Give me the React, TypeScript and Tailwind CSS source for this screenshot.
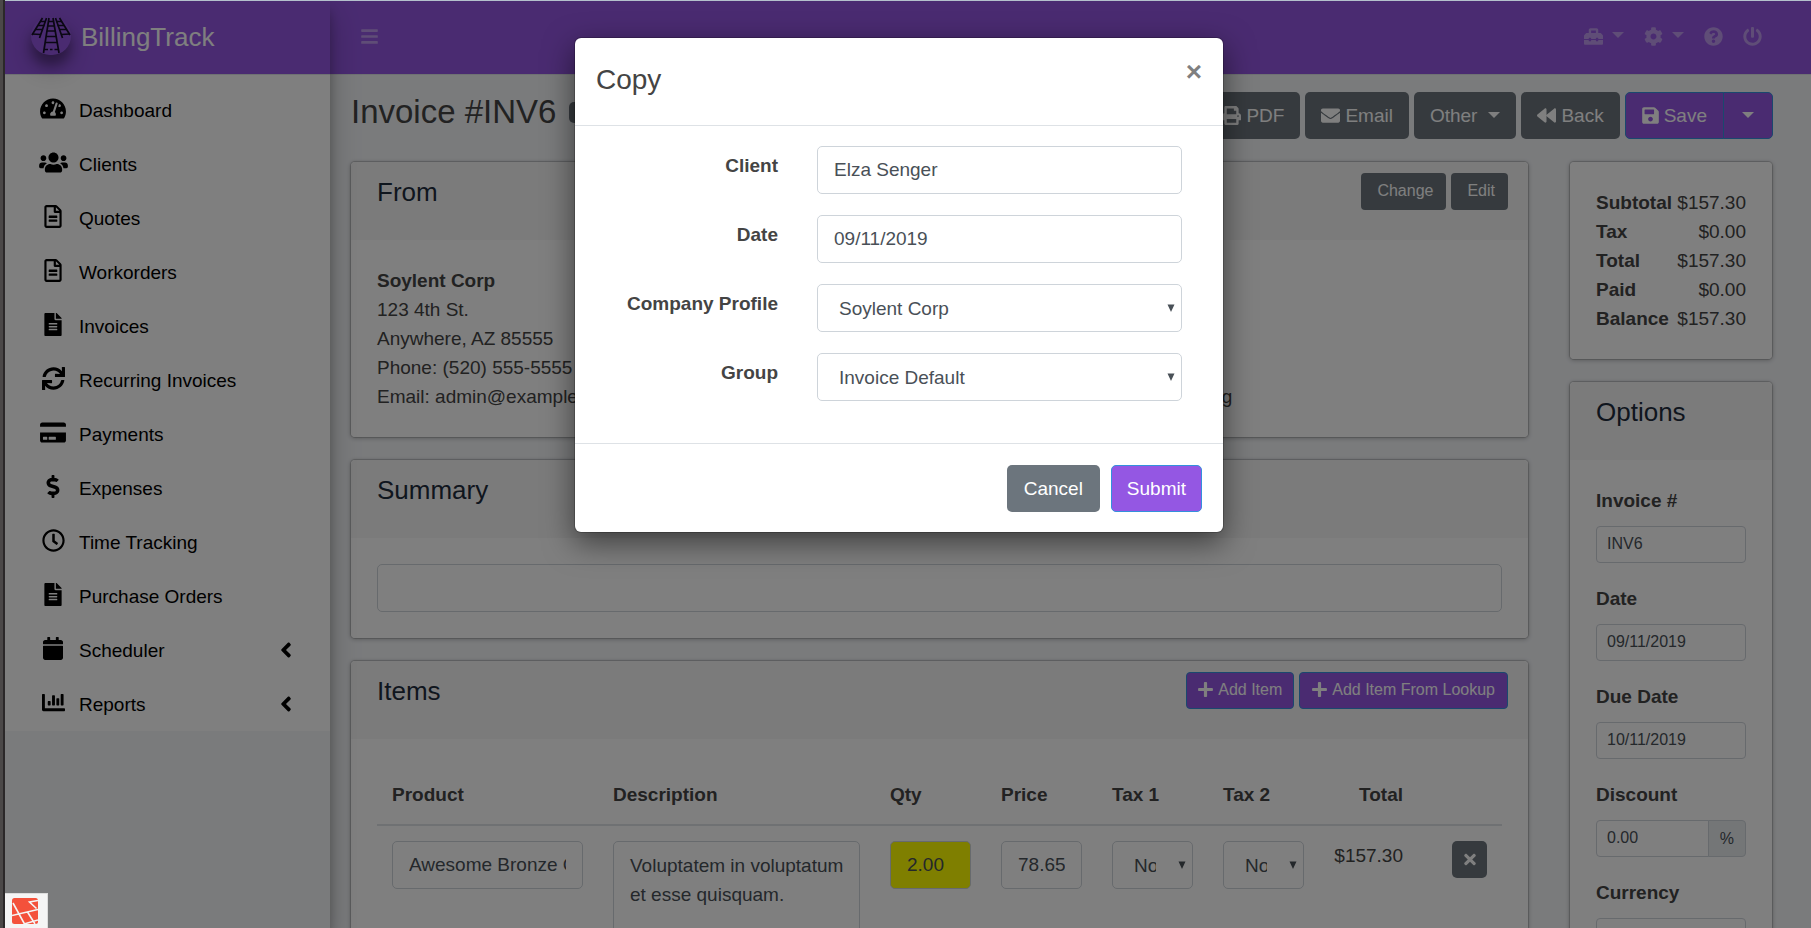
import React from "react";
import {
  FaAngleLeft,
  FaBackward,
  FaBars,
  FaCalendar,
  FaChartBar,
  FaCog,
  FaCreditCard,
  FaDollarSign,
  FaEnvelope,
  FaFileAlt,
  FaPlus,
  FaPowerOff,
  FaPrint,
  FaQuestionCircle,
  FaRegClock,
  FaRegFileAlt,
  FaSave,
  FaSync,
  FaTachometerAlt,
  FaTimes,
  FaToolbox,
  FaUsers,
} from "react-icons/fa";
import type { IconType } from "react-icons";

type NavEntry = { label: string; icon: IconType; width: string; expandable?: boolean };

const NAV: NavEntry[] = [
  { label: "Dashboard", icon: FaTachometerAlt, width: "w-[26px]" },
  { label: "Clients", icon: FaUsers, width: "w-[29px]" },
  { label: "Quotes", icon: FaRegFileAlt, width: "w-[18px]" },
  { label: "Workorders", icon: FaRegFileAlt, width: "w-[18px]" },
  { label: "Invoices", icon: FaFileAlt, width: "w-[18px]" },
  { label: "Recurring Invoices", icon: FaSync, width: "w-[23px]" },
  { label: "Payments", icon: FaCreditCard, width: "w-[26px]" },
  { label: "Expenses", icon: FaDollarSign, width: "w-[18px]" },
  { label: "Time Tracking", icon: FaRegClock, width: "w-[23px]" },
  { label: "Purchase Orders", icon: FaFileAlt, width: "w-[18px]" },
  { label: "Scheduler", icon: FaCalendar, width: "w-[20px]", expandable: true },
  { label: "Reports", icon: FaChartBar, width: "w-[23px]", expandable: true },
];

const TOTALS: [string, string][] = [
  ["Subtotal", "$157.30"],
  ["Tax", "$0.00"],
  ["Total", "$157.30"],
  ["Paid", "$0.00"],
  ["Balance", "$157.30"],
];

const CARD =
  "rounded-[5px] border border-black/5 bg-white bg-clip-padding shadow-[0_0_1px_rgba(0,0,0,0.125),0_1px_4px_rgba(0,0,0,0.2)]";
const GRAY_BTN = "rounded-[5px] bg-[#6c757d] text-white";
const PURPLE_BTN = "border border-[#3490dc] bg-[#9457e3] text-white";
const FIELD =
  "block h-12 w-full rounded-[5px] border border-[#ced4da] px-4 text-[#495057]";

function Caret() {
  return (
    <span className="inline-block border-x-[6px] border-t-[6px] border-x-transparent border-t-current" />
  );
}

function Logo() {
  return (
    <span className="h-[38px] w-[40px] rounded-full shadow-[0_13px_26px_rgba(0,0,0,0.25),0_10px_12px_rgba(0,0,0,0.3)]">
      <svg viewBox="0 0 40 38" className="h-[38px] w-[40px]" fill="none" stroke="#150f26">
        <circle cx="20" cy="18.500" r="19" fill="#9457e3" stroke="none" />
        <g strokeWidth="1.700">
          <path d="M18 1 12.500 36M22 1 28 36" />
          <path d="M17.500 4.500h5M17 9h6M16 14h8M15.500 19.500h9.500M14.500 25.500h11.500" />
          <path d="M13.500 32.500h3.500M19 32.500h2.500M23.500 32.500h3.500" strokeWidth="1.300" />
          <path d="M11.500 1 1 18M15.500 1 8.500 21" />
          <path d="M9 4.500h6M7 8.500h6.500M4.500 12.500h7M1 17l9 .5" />
          <path d="M28.500 1 39 18M24.500 1 31.500 21" />
          <path d="M31 4.500h-6M33 8.500h-6.500M35.500 12.500h-7M39 17l-9 .5" />
        </g>
      </svg>
    </span>
  );
}

function Sidebar() {
  return (
    <aside className="relative z-10 w-[325px] shrink-0 shadow-[0_14px_28px_rgba(0,0,0,0.25),0_10px_10px_rgba(0,0,0,0.22)]">
      <a href="#home" className="flex h-[73px] items-center gap-[10px] bg-[#9457e3] pb-[3px] pl-[26px]">
        <Logo />
        <span className="pt-[2px] text-[26px] leading-9 text-white">BillingTrack</span>
      </a>
      <nav className="border-t border-[#dee2e6] bg-white pt-2">
        <ul>
          {NAV.map(({ label, icon: Icon, width, expandable }) => (
            <li key={label}>
              <a href={"#" + label} className="flex h-[54px] items-center pr-[34px] pl-[30px] text-black">
                <span className="flex w-9 justify-center pb-1">
                  <Icon className={"h-[23px] shrink-0 " + width} />
                </span>
                <span className="ml-2 grow">{label}</span>
                {expandable && <FaAngleLeft className="h-6 w-5" />}
              </a>
            </li>
          ))}
        </ul>
      </nav>
    </aside>
  );
}

function TopBar() {
  return (
    <header className="flex h-[74px] items-center border-b border-[#dee2e6] bg-[#9457e3] pr-[49px] pb-[3px] pl-[31px] text-white/40">
      <button aria-label="Toggle menu">
        <FaBars className="h-[19px] w-[17px]" />
      </button>
      <div className="ml-auto flex items-center">
        <button aria-label="Tools" className="flex items-center gap-[9px]">
          <FaToolbox className="h-[19px] w-[19px]" />
          <span className="flex pb-[2px]"><Caret /></span>
        </button>
        <button aria-label="Settings" className="ml-5 flex items-center gap-[9px]">
          <FaCog className="h-[19px] w-[19px]" />
          <span className="flex pb-[2px]"><Caret /></span>
        </button>
        <button aria-label="Help" className="ml-5">
          <FaQuestionCircle className="h-[19px] w-[19px]" />
        </button>
        <button aria-label="Log out" className="ml-5">
          <FaPowerOff className="h-[19px] w-[19px]" />
        </button>
      </div>
    </header>
  );
}

function Card({
  title,
  actions,
  children,
}: {
  title?: string;
  actions?: React.ReactNode;
  children: React.ReactNode;
}) {
  return (
    <section className={CARD}>
      {title && (
        <div className="flex h-[78px] items-start justify-between rounded-t-[5px] bg-[#f7f7f7] pt-[11px] pr-5 pl-[26px]">
          <h2 className="pt-px text-[26px] leading-9 text-[#1f2d3d]">{title}</h2>
          <div className="flex gap-[5px] text-[16px]">{actions}</div>
        </div>
      )}
      <div className="p-[26px]">{children}</div>
    </section>
  );
}

function Toolbar() {
  const button = "flex h-[47px] items-center gap-[5px] px-4 " + GRAY_BTN;
  return (
    <div className="flex gap-[5px]">
      <button className={button}>
        <FaPrint className="h-[19px] w-[19px]" />
        PDF
      </button>
      <button className={button}>
        <FaEnvelope className="h-[19px] w-[19px]" />
        Email
      </button>
      <button className={button}>
        Other
        <span className="ml-[6px] flex pb-[2px]"><Caret /></span>
      </button>
      <button className={button}>
        <FaBackward className="h-[19px] w-[19px]" />
        Back
      </button>
      <div className="flex">
        <button className={"flex h-[47px] items-center gap-[5px] rounded-l-[5px] px-4 " + PURPLE_BTN}>
          <FaSave className="h-[19px] w-[17px]" />
          Save
        </button>
        <button
          aria-label="More save options"
          className={"-ml-px flex h-[47px] w-[50px] items-center justify-center rounded-r-[5px] pb-[2px] " + PURPLE_BTN}
        >
          <Caret />
        </button>
      </div>
    </div>
  );
}

function SelectBox({ id, label, value, narrow }: { id: string; label?: string; value: string; narrow?: boolean }) {
  return (
    <div className="relative">
      <select
        id={id}
        aria-label={label}
        defaultValue={value}
        className={
          "block h-12 w-full appearance-none rounded-[5px] border border-[#ced4da] bg-white pl-[21px] text-[#495057] " +
          (narrow ? "pr-9" : "pr-6")
        }
      >
        <option>{value}</option>
      </select>
      <svg viewBox="0 0 8 8" className="pointer-events-none absolute top-5 right-[7px] size-2 fill-[#495057]">
        <path d="M0.500 0.500h7L4 8z" />
      </svg>
    </div>
  );
}

function ItemsTable() {
  const cell = "px-[15px] pt-[15px] align-top";
  return (
    <table className="w-full table-fixed">
      <colgroup>
        <col className="w-[221px]" />
        <col className="w-[277px]" />
        <col className="w-[111px]" />
        <col className="w-[111px]" />
        <col className="w-[111px]" />
        <col className="w-[111px]" />
        <col className="w-[99px]" />
        <col className="w-[84px]" />
      </colgroup>
      <thead>
        <tr className="border-b-2 border-[#dee2e6] text-left">
          {["Product", "Description", "Qty", "Price", "Tax 1", "Tax 2"].map((name) => (
            <th key={name} className="p-[15px]">{name}</th>
          ))}
          <th className="p-[15px] text-right">Total</th>
          <th />
        </tr>
      </thead>
      <tbody>
        <tr>
          <td className={cell}>
            <input aria-label="Product" defaultValue="Awesome Bronze Coat" className={FIELD} />
          </td>
          <td className={cell}>
            <textarea
              aria-label="Description"
              defaultValue="Voluptatem in voluptatum et esse quisquam."
              className="block h-[104px] w-full resize-none rounded-[5px] border border-[#ced4da] py-[9px] pr-3 pl-4 text-[#495057]"
            />
          </td>
          <td className={cell}>
            <input aria-label="Quantity" defaultValue="2.00" className={FIELD + " bg-[#ffff00]"} />
          </td>
          <td className={cell}>
            <input aria-label="Price" defaultValue="78.65" className={FIELD} />
          </td>
          <td className={cell}>
            <SelectBox id="tax-1" label="Tax 1" value="None" narrow />
          </td>
          <td className={cell}>
            <SelectBox id="tax-2" label="Tax 2" value="None" narrow />
          </td>
          <td className={cell + " text-right"}>$157.30</td>
          <td className={cell + " text-right"}>
            <button
              aria-label="Remove item"
              className={"inline-flex h-[37px] w-[35px] items-center justify-center " + GRAY_BTN}
            >
              <FaTimes className="h-[17px] w-3" />
            </button>
          </td>
        </tr>
      </tbody>
    </table>
  );
}

function Options() {
  const small = "block h-[37px] w-full min-w-0 border border-[#ced4da] px-[10px] pb-[2px] text-[16px] text-[#495057]";
  const label = "mb-[11px] block font-bold";
  return (
    <Card title="Options">
      <div className="flex flex-col gap-[21px]">
        <div>
          <label htmlFor="number" className={label}>Invoice #</label>
          <input id="number" defaultValue="INV6" className={small + " rounded-[4px]"} />
        </div>
        <div>
          <label htmlFor="date" className={label}>Date</label>
          <input id="date" defaultValue="09/11/2019" className={small + " rounded-[4px]"} />
        </div>
        <div>
          <label htmlFor="due" className={label}>Due Date</label>
          <input id="due" defaultValue="10/11/2019" className={small + " rounded-[4px]"} />
        </div>
        <div>
          <label htmlFor="discount" className={label}>Discount</label>
          <div className="flex">
            <input id="discount" defaultValue="0.00" className={small + " rounded-l-[4px]"} />
            <span className="-ml-px flex items-center rounded-r-[4px] border border-[#ced4da] bg-[#e9ecef] px-[11px] text-[16px] text-[#495057]">
              %
            </span>
          </div>
        </div>
        <div>
          <label htmlFor="currency" className={label}>Currency</label>
          <select id="currency" className={small + " appearance-none rounded-[4px] bg-white"} />
        </div>
      </div>
    </Card>
  );
}

function CopyDialog() {
  const label = "pt-[5px] text-right font-bold";
  return (
    <div className="absolute inset-0 z-20 flex items-start justify-center bg-black/50 pt-9 pr-[18px]">
      <div
        role="dialog"
        aria-labelledby="copy-title"
        className="w-[650px] rounded-[7px] border border-black/20 bg-white bg-clip-padding shadow-[0_10px_30px_rgba(0,0,0,0.5)]"
      >
        <div className="flex h-[88px] items-start justify-between border-b border-[#dee2e6] pt-[21px] pr-[21px] pl-[21px]">
          <h2 id="copy-title" className="text-[28px] leading-[42px]">Copy</h2>
          <button aria-label="Close" className="text-[28px] leading-[26px] font-bold text-black/50">×</button>
        </div>
        <form className="grid grid-cols-[183fr_365fr] gap-x-[39px] gap-y-[21px] pt-5 pr-[41px] pb-[42px] pl-5">
          <label htmlFor="copy-client" className={label}>Client</label>
          <input id="copy-client" defaultValue="Elza Senger" className={FIELD} />
          <label htmlFor="copy-date" className={label}>Date</label>
          <input id="copy-date" defaultValue="09/11/2019" className={FIELD} />
          <label htmlFor="copy-profile" className={label}>Company Profile</label>
          <SelectBox id="copy-profile" value="Soylent Corp" />
          <label htmlFor="copy-group" className={label}>Group</label>
          <SelectBox id="copy-group" value="Invoice Default" />
        </form>
        <div className="flex justify-end gap-[11px] border-t border-[#dee2e6] px-[21px] pt-[21px] pb-5">
          <button className={"h-[47px] px-[17px] " + GRAY_BTN}>Cancel</button>
          <button className={"h-[47px] rounded-[5px] px-[15px] " + PURPLE_BTN}>Submit</button>
        </div>
      </div>
    </div>
  );
}

function DebugBadge() {
  return (
    <button
      aria-label="Open debug bar"
      className="absolute bottom-0 left-0 z-30 border-t border-r border-[#ddd] bg-[#f5f5f5] pt-1 pr-[9px] pb-1 pl-[7px]"
    >
      <svg viewBox="0 0 26 26" className="size-[26px]" fill="none" stroke="#f5f5f5" strokeWidth="1.600">
        <rect width="26" height="26" rx="2.500" fill="#f4513b" stroke="none" />
        <path d="M1 5 12.500 26M0 17.500 26 11.500M15.500 14 23 26M24.500 10.500 17.500 4 26 2.500M12 26 26 22" />
      </svg>
    </button>
  );
}

export default function App() {
  const smallButton = "h-[37px] rounded-[4px] pb-[2px] ";
  return (
    <div className="flex h-screen overflow-hidden font-['Liberation_Sans',Arial,sans-serif] text-[19px] leading-[29px] text-[#444]">
      <div className="w-[5px] shrink-0 border-r-2 border-[#2b2829] bg-[#4b4848]" />
      <div className="relative flex grow overflow-hidden border-t border-[#b4c0cc] bg-[#f4f6f9]">
        <Sidebar />
        <div className="min-w-0 grow">
          <TopBar />
          <main className="pr-[38px] pl-5">
            <div className="flex items-start justify-between pt-[17px] pb-[22px]">
              <h1 className="flex items-center gap-[13px] pl-px text-[33px] leading-[40px]">
                Invoice #INV6
                <span className="rounded-[5px] bg-[#6c757d] px-2 text-[14px] leading-[21px] font-bold text-white">
                  Draft
                </span>
              </h1>
              <Toolbar />
            </div>
            <div className="flex items-start gap-10">
              <div className="flex min-w-0 grow flex-col gap-[21px]">
                <div className="grid grid-cols-2 gap-5">
                  <Card title="From">
                    <p className="font-bold">Soylent Corp</p>
                    <p>123 4th St.</p>
                    <p>Anywhere, AZ 85555</p>
                    <p>Phone: (520) 555-5555</p>
                    <p>Email: admin@example.com</p>
                  </Card>
                  <Card
                    title="To"
                    actions={
                      <>
                        <button className={smallButton + "bg-[#6c757d] pr-[13px] pl-4 text-white"}>Change</button>
                        <button className={smallButton + "bg-[#6c757d] pr-[13px] pl-4 text-white"}>Edit</button>
                      </>
                    }
                  >
                    <div className="flex h-[145px] flex-col justify-between">
                      <p className="font-bold">Elza Senger</p>
                      <p>Email: e.senger@example.org</p>
                    </div>
                  </Card>
                </div>
                <Card title="Summary">
                  <input aria-label="Summary" className={FIELD} />
                </Card>
                <Card
                  title="Items"
                  actions={
                    <>
                      <button className={smallButton + "flex items-center gap-[5px] px-[11px] " + PURPLE_BTN}>
                        <FaPlus className="h-[17px] w-[15px]" />
                        Add Item
                      </button>
                      <button className={smallButton + "flex items-center gap-[5px] px-3 " + PURPLE_BTN}>
                        <FaPlus className="h-[17px] w-[15px]" />
                        Add Item From Lookup
                      </button>
                    </>
                  }
                >
                  <ItemsTable />
                </Card>
              </div>
              <div className="flex w-[204px] shrink-0 flex-col gap-[21px]">
                <Card>
                  <dl>
                    {TOTALS.map(([name, amount]) => (
                      <div key={name} className="flex justify-between">
                        <dt className="font-bold">{name}</dt>
                        <dd>{amount}</dd>
                      </div>
                    ))}
                  </dl>
                </Card>
                <Options />
              </div>
            </div>
          </main>
        </div>
        <CopyDialog />
        <DebugBadge />
      </div>
    </div>
  );
}
